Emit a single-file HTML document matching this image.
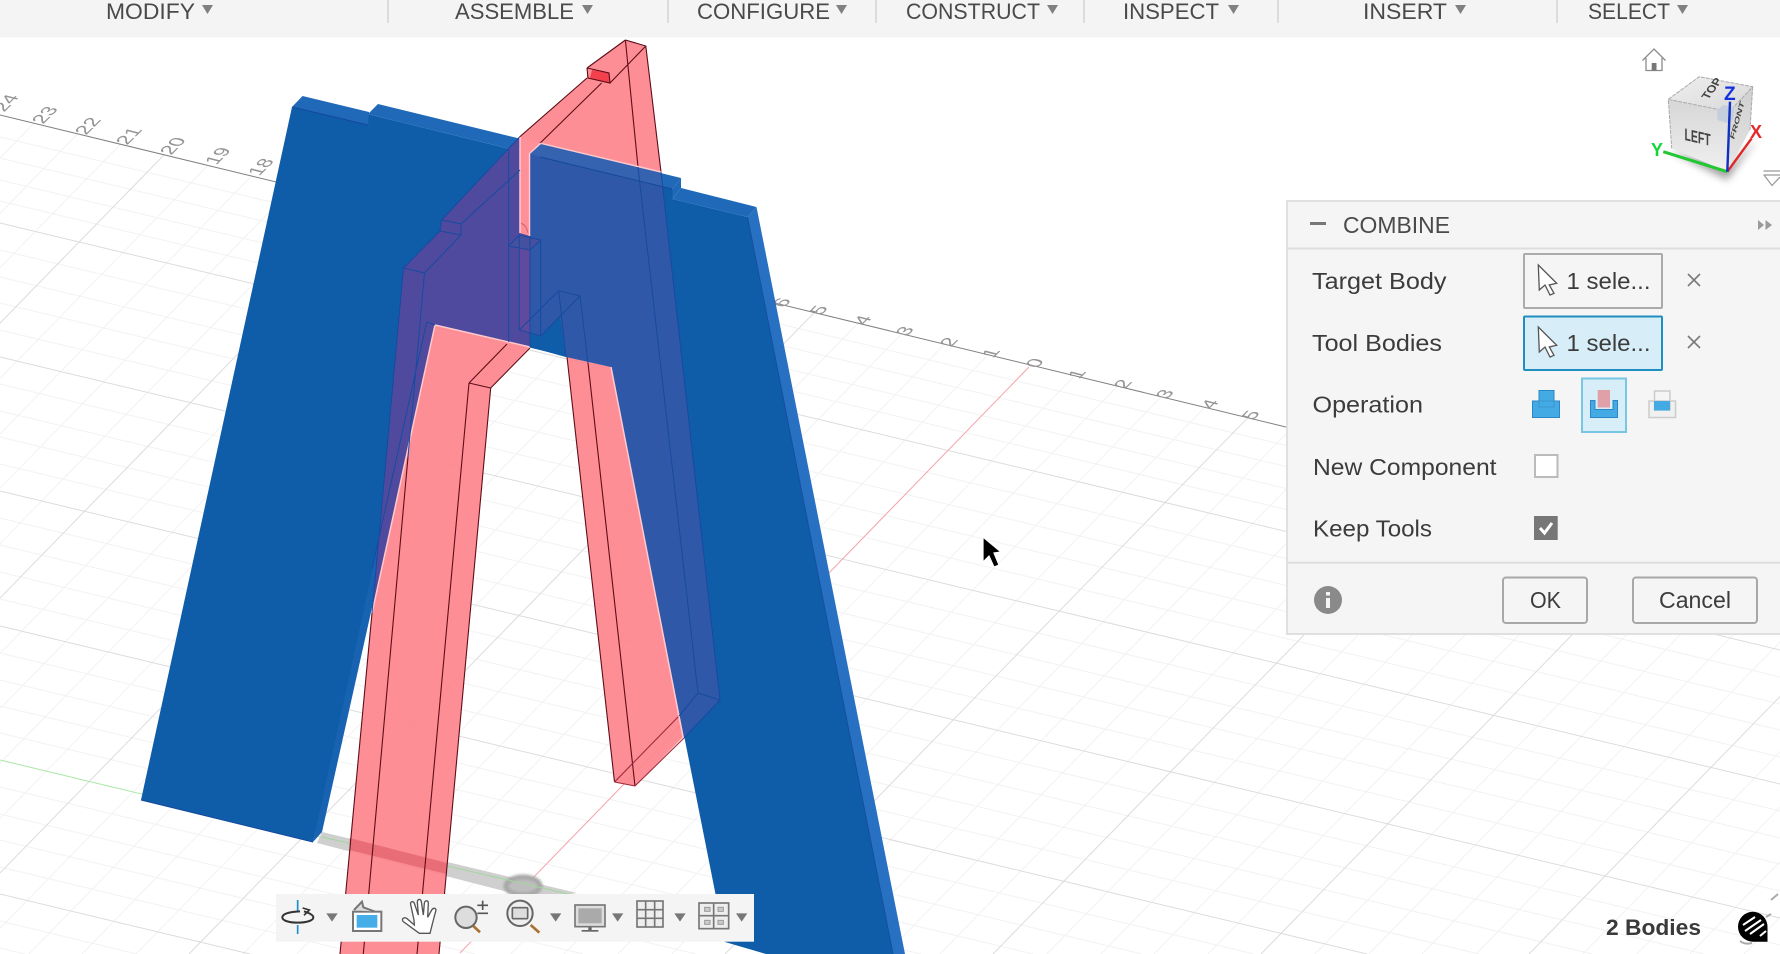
<!DOCTYPE html>
<html>
<head>
<meta charset="utf-8">
<title>Combine</title>
<style>
html,body{margin:0;padding:0;background:#fff;width:1780px;height:954px;overflow:hidden}
svg{display:block}
text{font-family:"Liberation Sans",sans-serif}
</style>
</head>
<body>
<svg width="1780" height="954" viewBox="0 0 1780 954" xmlns="http://www.w3.org/2000/svg">
<defs>
<clipPath id="g"><polygon points="0,115 1780,542 1780,954 0,954"/></clipPath>
<filter id="b1" x="-30%" y="-30%" width="160%" height="160%"><feGaussianBlur stdDeviation="4"/></filter>
<filter id="b2" x="-30%" y="-30%" width="160%" height="160%"><feGaussianBlur stdDeviation="1.2"/></filter>
<linearGradient id="lf" x1="0" y1="0" x2="0" y2="1"><stop offset="0" stop-color="#d6d6d6"/><stop offset="1" stop-color="#f0f0f0"/></linearGradient>
<linearGradient id="tf" x1="0" y1="0" x2="1" y2="1"><stop offset="0" stop-color="#efefef"/><stop offset="1" stop-color="#d8d8d8"/></linearGradient>
<linearGradient id="rf" x1="0" y1="0" x2="0" y2="1"><stop offset="0" stop-color="#cfcfcf"/><stop offset="1" stop-color="#e6e6e6"/></linearGradient>
</defs>

<rect width="1780" height="954" fill="#fff"/>

<!-- grid -->
<g clip-path="url(#g)" fill="none">
<path stroke="#f2f2f2" stroke-width="1" d="M0 137l1780 427M0 158l1780 427M0 180l1780 427M0 201l1780 427M0 250l1780 427M0 277l1780 427M0 303l1780 427M0 330l1780 427M0 384l1780 427M0 411l1780 427M0 437l1780 427M0 464l1780 427M0 518l1780 427M0 545L1704 954M0 572L1592 954M0 599L1479 954M0 653L1254 954M0 680L1142 954M0 706L1033 954M0 733L921 954M0 787L696 954M0 814L583 954M0 840L475 954M0 867L362 954M0 921L137 954M0 948L25 954"/>
<path stroke="#f2f2f2" stroke-width="1" d="M154 0l-930 954M208 0l-930 954M261 0l-930 954M369 0l-930 954M423 0l-930 954M476 0l-930 954M530 0l-930 954M637 0l-930 954M691 0l-930 954M744 0l-930 954M798 0l-930 954M905 0l-930 954M959 0l-930 954M1012 0l-930 954M1066 0l-930 954M1173 0l-930 954M1227 0l-930 954M1280 0l-930 954M1334 0l-930 954M1441 0l-930 954M1494 0l-930 954M1548 0l-930 954M1602 0l-930 954M1709 0l-930 954M1763 0l-930 954M1816 0l-930 954M1870 0l-930 954M1977 0l-930 954M2031 0l-930 954M2084 0l-930 954M2138 0l-930 954M2245 0l-930 954M2299 0l-930 954M2352 0l-930 954M2406 0l-930 954M2513 0l-930 954M2567 0l-930 954M2620 0l-930 954M2674 0l-930 954"/>
<path stroke="#dcdcdc" stroke-width="1" d="M0 223l1780 427M0 357l1780 427M0 491l1780 427M0 626L1367 954M0 894L250 954M315 0l-930 954M583 0l-930 954M851 0l-930 954M1119 0l-930 954M1655 0l-930 954M1923 0l-930 954M2191 0l-930 954M2459 0l-930 954M2727 0l-930 954"/>
<path stroke="#a9e6a4" stroke-width="1" d="M0 760L808 954"/>
<path stroke="#f5a3aa" stroke-width="1" d="M1029 367L460 953"/>
</g>
<!-- ruler -->
<path d="M0 115L1290 428" stroke="#808080" stroke-width="1" fill="none"/>
<g font-size="23" fill="#949494" text-anchor="middle">
<text transform="matrix(.62,-.62,.8,.2,12,104.5)">24</text>
<text transform="matrix(.62,-.62,.8,.2,51,116.5)">23</text>
<text transform="matrix(.62,-.62,.8,.2,94,127.5)">22</text>
<text transform="matrix(.62,-.62,.8,.2,135,137.5)">21</text>
<text transform="matrix(.62,-.62,.8,.2,179,147.5)">20</text>
<text transform="matrix(.62,-.62,.8,.2,224,157.5)">19</text>
<text transform="matrix(.62,-.62,.8,.2,267,168.5)">18</text>
<text transform="matrix(.62,-.62,.8,.2,788,304)">6</text>
<text transform="matrix(.62,-.62,.8,.2,825,311.5)">5</text>
<text transform="matrix(.62,-.62,.8,.2,869,321.5)">4</text>
<text transform="matrix(.62,-.62,.8,.2,911,332.5)">3</text>
<text transform="matrix(.62,-.62,.8,.2,955,343.5)">2</text>
<text transform="matrix(.62,-.62,.8,.2,997,354.5)">1</text>
<text transform="matrix(.62,-.62,.8,.2,1041,364.5)">0</text>
<text transform="matrix(.62,-.62,.8,.2,1083,375.5)">1</text>
<text transform="matrix(.62,-.62,.8,.2,1129,385.5)">2</text>
<text transform="matrix(.62,-.62,.8,.2,1171,395.5)">3</text>
<text transform="matrix(.62,-.62,.8,.2,1216,405.5)">4</text>
<text transform="matrix(.62,-.62,.8,.2,1257,416.5)">5</text>
</g>

<!-- ground shadow -->
<polygon points="322,832 577,893 539,900 317,843" fill="#cfcfcf"/>
<ellipse cx="523" cy="886" rx="17" ry="9" fill="#bdbdbd" stroke="#a8a8a8" stroke-width="5" filter="url(#b2)"/>
<path d="M322 837L577 896" stroke="#9fd89a" stroke-width="1" fill="none"/>

<!-- red body -->
<g fill="#fd848c" fill-opacity=".92">
<polygon points="625.4,40 645.8,46 661,172 539,143 530,153 530,236 519.5,233 519.5,137 587,78 587,68"/>
<polygon points="435,325 530,347 490.7,388 439,954 340,954 372,613"/>
<polygon points="567,357 611,367 683,737 635,786 614.5,782"/>
</g>
<polygon points="349.6,838 446.7,863 446.7,874 349.6,850" fill="#d8505e" fill-opacity=".5"/>
<polygon points="592,70 609,73 610,83 590,78" fill="#f2404c"/>
<g fill="none" stroke="#5e0d18" stroke-width="1.1">
<path d="M625.4 40L645.8 46L661 172M625.4 40L638 167M625.4 40L587 68M587 68L609 73L610 83L588 78L587 68M587 78L519.5 137M645.8 46L610 83M601.6 83L530 153"/>
<path d="M372 613L340 954M408 457L363.3 954M469 383L417 954M490.7 388L439 954M469 383L490.7 388M469 383L507 344M490.7 388L530 348"/>
<path d="M567 357L614.5 782M588 363L635 786"/>
<path d="M614.5 782L635 786M614.5 782L679 716M635 786L684 738" stroke="#a02838"/>
</g>

<!-- blue body -->
<polygon points="292,107 368,125 368,114 672.5,189 672.5,199 747.5,217 893,954 766,954 725,942 611,367 435,325 313,842 141,800" fill="#0f5da9"/>
<polygon points="426.7,322 435,325 322,832 313,842" fill="#1862b2"/>
<polygon points="747.5,217 756.5,207 905,954 893,954" fill="#2870c2"/>
<polygon points="302.5,96 369,112 368,125 292,107" fill="#2068b8"/>
<polygon points="378,104 681,178 672.5,189 368,114" fill="#2068b8"/>
<polygon points="681,178 681,188 672.5,199 672.5,189" fill="#2068b8"/>
<polygon points="681,188 756.5,207 747.5,217 672.5,199" fill="#2068b8"/>

<!-- overlaps -->
<polygon points="519.5,137 441.5,220 440,231 403.5,268 372,613 435,325 530,347 530,236 519.5,233" fill="#4f4a9e"/>
<polygon points="530,153 540.7,143.3 661,172 720,700 684,738 611,367 566,357 530,347" fill="#2f58a8"/>
<polygon points="540.7,143.3 661,172 663,187 530,154" fill="#3563b0"/>
<polygon points="530,333 540.7,336 560,316.7 566,357 530,347" fill="#0f5da9"/>
<polygon points="519.3,235 530,250 530,333 519.3,330" fill="#5f4a9e"/>
<polygon points="530,250 508.7,246 519.3,235 540.7,240" fill="#45509f"/>
<!-- slit through blue -->
<polygon points="519.5,137 540.7,143.3 530,153 530,236 519.5,233" fill="#fd9098"/>
<!-- light edges -->
<g fill="none" stroke="#ffc9cd" stroke-width="1.5">
<path d="M435 325L372 613M435 325L530 347M611 367L683 737M540.7 143.3L661 172M530 153L540.7 143.3M520 137L520 233M529.5 153L529.5 236"/>
</g>
<path d="M521 223Q527 226 528 233" fill="none" stroke="#d9626c" stroke-width="1"/>
<!-- blue lines -->
<g fill="none" stroke="#174aa0" stroke-width="1">
<path d="M519.5 137L441.5 220L440 231L403.5 268L372 613M520 170L461 224L461 235L424.5 273L408 457M441.5 220L461 224M440 231L461 235M403.5 268L424.5 273M426.7 322L435 325M426.7 322L372 569"/>
<path d="M508.7 149L508.7 342M508.7 246L519.3 235L540.7 240L530 250L508.7 246M530 236L530 347M519.3 235L519.3 330M540.7 240L540.7 336M519.3 330L540.7 336L580 296L558.7 290.7L519.3 330M558.7 290.7L566 357M580 296L588 363"/>
<path d="M638 167L698 693L720 700L661 172M720 700L684 738M698 693L679 716"/>
<path d="M540 157L672 189M292 107L368 125M313 842L141 800" stroke="#14499c"/>
</g>
<path d="M747.5 217L893 954" stroke="#14509c" stroke-width="1" fill="none"/>

<!-- cursor -->
<polygon points="983,537 983,562 989,556 994,567 999,565 994,553 1001,552" fill="#000" stroke="#fff" stroke-width="1.2"/>

<!-- top toolbar -->
<rect x="0" y="0" width="1780" height="37.5" fill="#f4f4f4"/>
<g font-size="22" fill="#4a4a4a">
<text x="106" y="19" textLength="89" lengthAdjust="spacingAndGlyphs">MODIFY</text>
<text x="455" y="19" textLength="119" lengthAdjust="spacingAndGlyphs">ASSEMBLE</text>
<text x="697" y="19" textLength="133" lengthAdjust="spacingAndGlyphs">CONFIGURE</text>
<text x="906" y="19" textLength="134" lengthAdjust="spacingAndGlyphs">CONSTRUCT</text>
<text x="1123" y="19" textLength="96" lengthAdjust="spacingAndGlyphs">INSPECT</text>
<text x="1363" y="19" textLength="84" lengthAdjust="spacingAndGlyphs">INSERT</text>
<text x="1588" y="19" textLength="82" lengthAdjust="spacingAndGlyphs">SELECT</text>
</g>
<g fill="#808080">
<polygon points="202,5 213,5 207.5,14"/>
<polygon points="582,5 593,5 587.5,14"/>
<polygon points="836,5 847,5 841.5,14"/>
<polygon points="1047,5 1058,5 1052.5,14"/>
<polygon points="1228,5 1239,5 1233.5,14"/>
<polygon points="1455,5 1466,5 1460.5,14"/>
<polygon points="1677,5 1688,5 1682.5,14"/>
</g>
<g stroke="#c4c4c4" stroke-width="1"><path d="M388 0V23M668 0V23M876 0V23M1084 0V23M1278 0V23M1557 0V23"/></g>

<!-- home -->
<path d="M1642.5 60.5L1654 49L1665.5 60.5M1646 58V70.5H1662V58" fill="#fff" stroke="#8a8a8a" stroke-width="1.3"/>
<rect x="1651.7" y="63" width="4.8" height="7.5" fill="#777"/>

<!-- view cube -->
<polygon points="1668,150 1727,180 1758,138 1730,165" fill="#888" opacity=".8" filter="url(#b1)"/>
<polygon points="1668.3,99.3 1729.3,111.7 1727.3,171.7 1671.7,148.3" fill="url(#lf)"/>
<polygon points="1668.3,99.3 1699.3,76.7 1752.7,86.7 1729.3,111.7" fill="url(#tf)"/>
<polygon points="1729.3,111.7 1752.7,86.7 1750,130 1727.3,171.7" fill="url(#rf)"/>
<path d="M1668.3 99.3L1699.3 76.7L1752.7 86.7L1729.3 111.7L1668.3 99.3L1671.7 148.3M1752.7 86.7L1750 130" fill="none" stroke="#aaa" stroke-width="1" stroke-dasharray="4 1"/>
<polygon points="1717.3,110 1723.3,105 1734,107.3 1733.3,119.3 1728.3,123.3 1717.3,120" fill="#c4cedd"/>
<text transform="matrix(.97,.22,0,1,1684.5,140)" font-size="17" fill="#444" font-weight="bold" textLength="27" lengthAdjust="spacingAndGlyphs">LEFT</text>
<text transform="matrix(.55,-.75,.8,.35,1708,100)" font-size="13" fill="#444" font-weight="bold">TOP</text>
<text transform="matrix(.25,-.9,.5,.3,1734,140)" font-size="12" fill="#444" font-weight="bold">FRONT</text>
<path d="M1663.3 151.7L1727.3 171.7" stroke="#22c832" stroke-width="3" fill="none"/>
<path d="M1727.3 171.7L1751.7 138.3" stroke="#e02828" stroke-width="2.4" fill="none"/>
<path d="M1730 101.7L1727.3 171.7" stroke="#1030c0" stroke-width="2.4" fill="none"/>
<text x="1724" y="100" font-size="19" font-weight="bold" fill="#1230e0">Z</text>
<text x="1651" y="156" font-size="18" font-weight="bold" fill="#10d838">Y</text>
<text x="1750" y="138" font-size="18" font-weight="bold" fill="#e82828">X</text>
<path d="M1763.5 171H1780M1763.5 175H1780M1764 175L1772 185.5L1780 177" fill="#fff" stroke="#999" stroke-width="1.2"/>

<!-- combine panel -->
<rect x="1287" y="201" width="494" height="433" fill="#f5f5f5" stroke="#e0e0e0" stroke-width="2"/>
<path d="M1287 248.5H1780M1287 562.7H1780" stroke="#dedede" stroke-width="2" fill="none"/>
<rect x="1310" y="222" width="16" height="3" fill="#777"/>
<text x="1343" y="233" font-size="23" fill="#4a4a4a" textLength="107" lengthAdjust="spacingAndGlyphs">COMBINE</text>
<path d="M1758 220V230L1764 225ZM1765.5 220V230L1772 225Z" fill="#9a9a9a"/>
<g font-size="23" fill="#3c3c3c">
<text x="1312" y="289" textLength="134.5" lengthAdjust="spacingAndGlyphs">Target Body</text>
<text x="1312" y="351" textLength="130" lengthAdjust="spacingAndGlyphs">Tool Bodies</text>
<text x="1312.5" y="412.5" textLength="110.5" lengthAdjust="spacingAndGlyphs">Operation</text>
<text x="1313" y="475" textLength="183.5" lengthAdjust="spacingAndGlyphs">New Component</text>
<text x="1313" y="536.5" textLength="119" lengthAdjust="spacingAndGlyphs">Keep Tools</text>
</g>
<rect x="1524" y="254" width="138" height="54" fill="#f5f5f5" stroke="#ababab" stroke-width="2" rx="1"/>
<rect x="1524" y="316.5" width="138" height="53.5" fill="#d7eef8" stroke="#1f8fc0" stroke-width="2" rx="1"/>
<g fill="#fff" stroke="#555" stroke-width="1.3">
<polygon points="1538.3,265 1539.3,290 1545,285 1550,295 1554,293.3 1549.3,285 1556.7,283.3"/>
<polygon points="1538.3,327 1539.3,352 1545,347 1550,357 1554,355.3 1549.3,347 1556.7,345.3"/>
</g>
<g font-size="23" fill="#3c3c3c">
<text x="1566.5" y="289" textLength="84" lengthAdjust="spacingAndGlyphs">1 sele...</text>
<text x="1566.5" y="351" textLength="84" lengthAdjust="spacingAndGlyphs">1 sele...</text>
</g>
<path d="M1688 274L1700 286M1700 274L1688 286M1688 336L1700 348M1700 336L1688 348" stroke="#7a7a7a" stroke-width="1.6" fill="none"/>
<!-- operation icons -->
<rect x="1539" y="390.5" width="15" height="16" fill="#44aae4" stroke="#2a86c4" stroke-width="1"/>
<rect x="1532.5" y="401" width="27" height="16.5" fill="#44aae4" stroke="#2a86c4" stroke-width="1"/>
<rect x="1539" y="401" width="15" height="6" fill="#44aae4" stroke="#3a96d0" stroke-width="1"/>
<rect x="1582" y="378.5" width="44" height="53.5" fill="#d7eef8" stroke="#78c6e4" stroke-width="2"/>
<path d="M1590.5 400.5H1595V409.5H1613V400.5H1617.5V417.5H1590.5Z" fill="#44aae4" stroke="#2a86c4" stroke-width="1"/>
<rect x="1597.7" y="390" width="12.3" height="17.5" fill="#e0a0a8"/>
<rect x="1649" y="401" width="26.5" height="16.5" fill="#f0f0f0" stroke="#ccc" stroke-width="1.5"/>
<rect x="1654.5" y="391" width="15.5" height="19" fill="none" stroke="#ccc" stroke-width="1.5"/>
<rect x="1654" y="401" width="16" height="9.5" fill="#44aae4"/>
<rect x="1535" y="455" width="22.5" height="22" fill="#fff" stroke="#bbb" stroke-width="2"/>
<rect x="1534" y="516" width="23.7" height="24" fill="#777"/>
<path d="M1540 528L1544.5 533L1552 523" fill="none" stroke="#fff" stroke-width="3"/>
<circle cx="1328" cy="600" r="14" fill="#8a8a8a"/>
<rect x="1326" y="598" width="4" height="10" fill="#f5f5f5"/>
<rect x="1326" y="592" width="4" height="3.5" fill="#f5f5f5"/>
<rect x="1503" y="577.5" width="84" height="45.5" fill="#f5f5f5" stroke="#a8a8a8" stroke-width="2" rx="3"/>
<rect x="1633" y="577.5" width="124" height="45.5" fill="#f5f5f5" stroke="#a8a8a8" stroke-width="2" rx="3"/>
<g font-size="23" fill="#3c3c3c">
<text x="1530" y="608" textLength="31" lengthAdjust="spacingAndGlyphs">OK</text>
<text x="1659" y="608" textLength="72" lengthAdjust="spacingAndGlyphs">Cancel</text>
</g>

<!-- nav bar -->
<rect x="276" y="894" width="478" height="47.7" fill="#f4f4f4"/>
<g transform="translate(260,860) scale(.33333)">
<path d="M113 120V156M113 195V222" stroke="#1a90d0" stroke-width="5" fill="none"/>
<path d="M132 154C150 160 160 166 160 172C160 182 138 188 113 188C88 188 67 182 67 172C67 162 88 155 120 154" fill="none" stroke="#333" stroke-width="6"/>
<path d="M128 144L148 150L132 166" fill="none" stroke="#333" stroke-width="5"/>
<g fill="#777">
<polygon points="199,160 233,160 216,185"/>
<polygon points="870,160 904,160 887,185"/>
<polygon points="1056,160 1090,160 1073,185"/>
<polygon points="1243,160 1277,160 1260,185"/>
<polygon points="1428,160 1462,160 1445,185"/>
</g>
<rect x="279" y="155" width="85" height="58" fill="#fff" stroke="#777" stroke-width="6"/>
<rect x="290" y="165" width="62" height="38" fill="#45ade8"/>
<path d="M282 150L306 125L310 142L345 155" fill="#ddd" stroke="#777" stroke-width="6"/>
<path d="M478 220L510 220C515 200 520 180 528 150C526 142 518 144 514 152L503 172L505 130C505 120 495 120 493 130L490 165L484 125C482 116 473 116 472 126L475 165L463 130C460 122 450 124 452 134L462 180L463 195L440 175C430 170 424 178 430 185Z" fill="#fff" stroke="#555" stroke-width="4"/>
<circle cx="618" cy="172" r="32" fill="#ddd" stroke="#666" stroke-width="6"/>
<path d="M640 198L660 217" stroke="#a87030" stroke-width="8" fill="none"/>
<path d="M668 122V150M652 136H684M652 160H684" stroke="#555" stroke-width="5" fill="none"/>
<circle cx="780" cy="160" r="38" fill="#eee" stroke="#666" stroke-width="6"/>
<rect x="757" y="143" width="46" height="33" rx="3" fill="#ddd" stroke="#666" stroke-width="5"/>
<path d="M812 195L838 218" stroke="#a87030" stroke-width="8" fill="none"/>
<rect x="945" y="135" width="90" height="65" fill="#ddd" stroke="#777" stroke-width="5"/>
<rect x="955" y="145" width="70" height="45" fill="#aaa"/>
<rect x="985" y="202" width="10" height="8" fill="#666"/>
<rect x="965" y="210" width="50" height="5" fill="#666"/>
<rect x="1131" y="123" width="78" height="78" fill="#eee" stroke="#777" stroke-width="5"/>
<path d="M1157 123V201M1184 123V201M1131 149H1209M1131 175H1209" stroke="#777" stroke-width="5" fill="none"/>
<rect x="1317" y="129" width="89" height="77" fill="#eee" stroke="#777" stroke-width="5"/>
<path d="M1361 129V206M1317 167H1406" stroke="#777" stroke-width="5" fill="none"/>
<g fill="#ccc" stroke="#999" stroke-width="3">
<rect x="1334" y="142" width="16" height="12"/>
<rect x="1374" y="142" width="16" height="12"/>
<rect x="1334" y="181" width="16" height="12"/>
<rect x="1374" y="181" width="16" height="12"/>
</g>
</g>

<!-- bottom right -->
<path d="M1740 941Q1745 945 1752 943M1766 917L1771 914M1771 900L1778 894" stroke="#aaa" stroke-width="2" fill="none"/>
<text x="1606" y="935" font-size="22" font-weight="bold" fill="#3a3a3a" textLength="95" lengthAdjust="spacingAndGlyphs">2 Bodies</text>
<path d="M1753 911.7A15 15 0 0 0 1753 941.7H1767.5V926.7A15 15 0 0 0 1753 911.7Z" fill="#000"/>
<path d="M1743 925L1755 917M1745 931L1761 920M1750 934L1764 924M1760 936L1766 931" stroke="#fff" stroke-width="2" fill="none"/>
</svg>
</body>
</html>
